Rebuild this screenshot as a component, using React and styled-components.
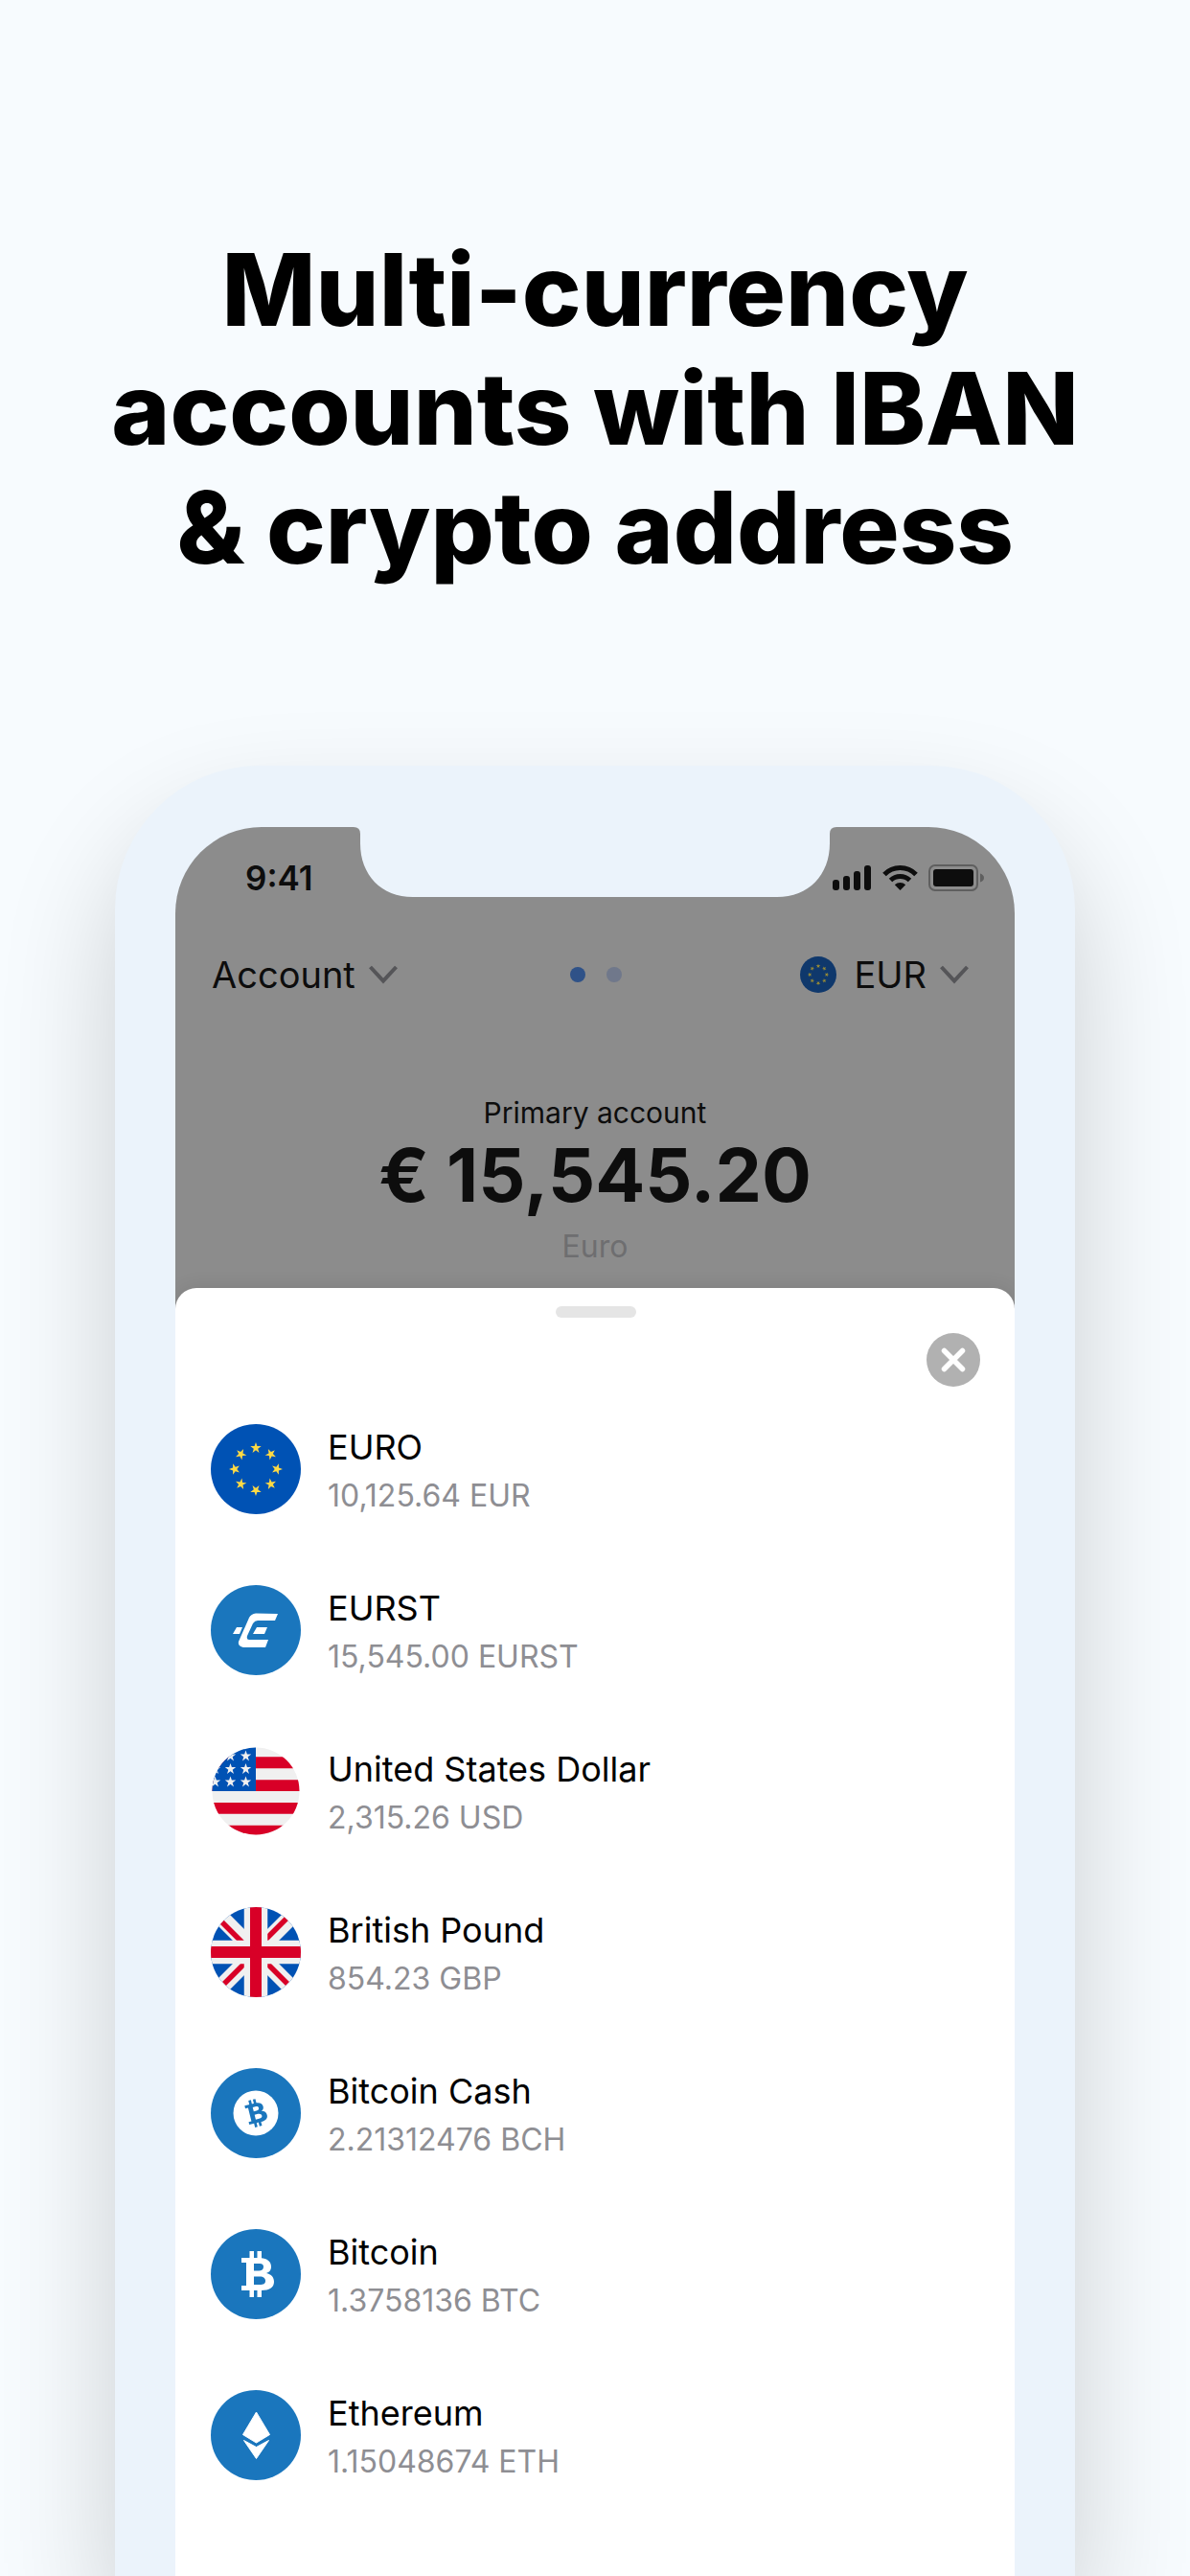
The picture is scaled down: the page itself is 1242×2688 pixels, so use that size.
import React from 'react';
import styled, { createGlobalStyle } from 'styled-components';

const GlobalStyle = createGlobalStyle`
  * {
    box-sizing: border-box;
  }

  body {
    margin: 0;
    background: #f7fbfe;
    font-family: Inter, 'Liberation Sans', sans-serif;
    font-optical-sizing: none;
    color: #000;
  }

  button {
    padding: 0;
    border: 0;
    background: none;
    font: inherit;
    color: inherit;
    cursor: pointer;
  }

  svg {
    display: block;
    flex-shrink: 0;
  }
`

const Page = styled.main`
  height: 100vh;
  display: flex;
  flex-direction: column;
  align-items: center;
  overflow: hidden;
`

const Headline = styled.h1`
  width: 100%;
  margin: 0;
  padding: 240px 40px 187px;
  font-size: 104px;
  font-weight: 800;
  line-height: 124px;
  text-align: center;
`

const Phone = styled.section`
  flex: 1;
  display: flex;
  width: 81%;
  max-width: 1002px;
  padding: 64px 63px 0;
  border-radius: 150px 150px 0 0;
  background: #ebf3fb;
  box-shadow: 0 60px 120px rgba(0, 0, 0, 0.18);
`

const Screen = styled.div`
  position: relative;
  flex: 1;
  display: flex;
  flex-direction: column;
  border-radius: 90px 90px 0 0;
  background: #8c8c8c;
  color: #0d0d0d;
  overflow: hidden;
`

const Notch = styled.svg`
  position: absolute;
  top: 0;
  left: 50%;
  width: 504px;
  margin-left: -252px;
`

const StatusBar = styled.div`
  display: flex;
  align-items: center;
  justify-content: space-between;
  height: 106px;
  padding: 0 32px 0 73px;
`

const Time = styled.time`
  font-size: 35px;
  font-weight: 600;
`

const StatusIcons = styled.div`
  display: flex;
  align-items: center;
  gap: 11px;
`

const NavBar = styled.nav`
  display: grid;
  grid-template-columns: 1fr auto 1fr;
  align-items: center;
  height: 96px;
  padding: 0 36px 0 38px;
`

const NavButton = styled.button`
  display: flex;
  align-items: center;
  justify-self: ${props => props.$end ? 'end' : 'start'};
  gap: 14px;
  margin-right: 12px;
  font-size: 38px;
`

const NavFlag = styled.span`
  margin-right: 4px;
`

const Dots = styled.div`
  display: flex;
  gap: 22px;
`

const Dot = styled.span`
  width: 16px;
  height: 16px;
  border-radius: 50%;
  background: ${props => props.$active ? '#2f5288' : '#70788b'};
`

const Balance = styled.div`
  height: 279px;
  padding-top: 76px;
  text-align: center;
`

const AccountName = styled.p`
  margin: 0;
  font-size: 30px;
  line-height: 40px;
`

const Amount = styled.p`
  margin: 0;
  font-size: 77px;
  font-weight: 700;
  line-height: 90px;
`

const CurrencyName = styled.p`
  margin: 10px 0 0;
  font-size: 32px;
  line-height: 40px;
  color: #6e6e70;
`

const Sheet = styled.div`
  flex: 1;
  display: flex;
  flex-direction: column;
  padding: 19px 36px 0 37px;
  border-radius: 22px 22px 0 0;
  background: #fff;
  box-shadow: 0 0 20px rgba(0, 0, 0, 0.1);
  color: #000;
`

const Handle = styled.div`
  align-self: center;
  width: 84px;
  height: 12px;
  border-radius: 6px;
  background: #e5e5e5;
`

const CloseButton = styled.button`
  align-self: flex-end;
  margin-top: 16px;
`

const CurrencyList = styled.ul`
  margin: 2px 0 0;
  padding: 0;
  list-style: none;
`

const CurrencyRow = styled.button`
  display: flex;
  align-items: center;
  gap: 28px;
  width: 100%;
  height: 168px;
  text-align: left;
`

const RowText = styled.span`
  padding-top: 6px;
`

const RowName = styled.span`
  display: block;
  font-size: 36px;
  line-height: 50px;
`

const RowAmount = styled.span`
  display: block;
  font-size: 32px;
  line-height: 52px;
  color: #8e8e93;
`

const STAR = '0,-6 1.4,-1.9 5.7,-1.9 2.2,0.7 3.5,4.9 0,2.3 -3.5,4.9 -2.2,0.7 -5.7,-1.9 -1.4,-1.9'

const EuroIcon = ({ size = 94, dimmed }) => (
  <svg width={size} height={size} viewBox="0 0 94 94">
    <circle cx="47" cy="47" r="47" fill={dimmed ? '#0f386c' : '#0052b4'} />
    {[0, 45, 90, 135, 180, 225, 270, 315].map(a => (
      <polygon
        key={a}
        points={STAR}
        fill={dimmed ? '#9a8c35' : '#ffda44'}
        transform={`rotate(${a} 47 47) translate(47 25)`}
      />
    ))}
  </svg>
)

const EurstIcon = () => (
  <svg width="94" height="94" viewBox="0 0 94 94">
    <circle cx="47" cy="47" r="47" fill="#1a76bd" />
    <g fill="#fff">
      <path d="M70 30 67 37H49Q46 37 44 40L38 53Q37 57 40 57H60L57 65H34Q28 64 29 59L40 34Q42 30 47 29.500Z" />
      <path d="M48 44H59L56 51H44Z" />
      <path d="M27 44H33L30 51H23Z" />
    </g>
  </svg>
)

const DollarIcon = () => (
  <svg width="94" height="94" viewBox="0 0 94 94">
    <clipPath id="usd"><circle cx="47" cy="47" r="45.500" /></clipPath>
    <g clipPath="url(#usd)">
      <rect width="94" height="94" fill="#f0f0f0" />
      <path fill="#d80027" d="M0 11.300H94V23.200H0ZM0 35.200H94V47H0ZM0 59H94V70.800H0ZM0 82.800H94V95H0Z" />
      <rect width="47" height="47" fill="#0052b4" />
      {[10.500, 24, 37.500].map(y => [4.500, 20.500, 36.500].map(x => (
        <polygon key={`${x}-${y}`} points={STAR} fill="#f0f0f0" transform={`translate(${x} ${y})`} />
      )))}
    </g>
  </svg>
)

const PoundIcon = () => (
  <svg width="94" height="94" viewBox="0 0 94 94">
    <clipPath id="gbp"><circle cx="47" cy="47" r="47" /></clipPath>
    <g clipPath="url(#gbp)">
      <rect width="94" height="94" fill="#0052b4" />
      <path d="M0 0 94 94M94 0 0 94" stroke="#f0f0f0" strokeWidth="17" />
      <path d="M11 15 34 38M80 11 55 36M37 57 14 80M57 57 80 80" stroke="#d80027" strokeWidth="5.500" />
      <path d="M47 0V94M0 47H94" stroke="#f0f0f0" strokeWidth="24.500" />
      <path d="M47 0V94M0 47H94" stroke="#d80027" strokeWidth="12" />
    </g>
  </svg>
)

// the coin sign on its own, centred on 0,0
const BitcoinSign = ({ color, hole }) => (
  <g fill={color}>
    <path d="M-15-17H3C12-17 16-13 16-8C16-4 14-2 11-1C16 0 19 3 19 8C19 14 14 17 6 17H-15V12H-10V-12H-15Z" />
    <path d="M-6.500-24H-2V-16H-6.500ZM1.500-24H6V-16H1.500ZM-6.500 16H-2V24H-6.500ZM1.500 16H6V24H1.500Z" />
    <path fill={hole} d="M-2-11H4C7-11 8-9.500 8-7.500C8-5 6-3.500 3-3.500H-2ZM-2 2.500H4C8 2.500 10 4.500 10 7C10 10 8 11 4 11H-2Z" />
  </g>
)

const BitcoinCashIcon = () => (
  <svg width="94" height="94" viewBox="0 0 94 94">
    <circle cx="47" cy="47" r="47" fill="#1a76bd" />
    <circle cx="47" cy="47" r="23.500" fill="#fff" />
    <g transform="translate(46.500 47) rotate(-14) scale(0.6)">
      <BitcoinSign color="#1a76bd" hole="#fff" />
    </g>
  </svg>
)

const BitcoinIcon = () => (
  <svg width="94" height="94" viewBox="0 0 94 94">
    <circle cx="47" cy="47" r="47" fill="#1a76bd" />
    <g transform="translate(47 47)">
      <BitcoinSign color="#fff" hole="#1a76bd" />
    </g>
  </svg>
)

const EthereumIcon = () => (
  <svg width="94" height="94" viewBox="0 0 94 94">
    <circle cx="47" cy="47" r="47" fill="#1a76bd" />
    <g fill="#fff" stroke="#fff" strokeWidth="1" strokeLinejoin="round">
      <path d="M47.500 23 61.500 46.500 47.500 55 33.500 46.500Z" />
      <path d="M34.500 52.500 47.500 59.500 60.500 52.500 47.500 71.500Z" />
    </g>
  </svg>
)

const Chevron = () => (
  <svg width="30" height="20" viewBox="0 0 30 20" fill="none" stroke="#555558" strokeWidth="4">
    <path d="M1.500 2 15 16.500 28.500 2" />
  </svg>
)

const Signal = () => (
  <svg width="41" height="26" viewBox="0 0 41 26" fill="#0d0d0d">
    <rect y="15" width="7" height="11" rx="3" />
    <rect x="11" y="11" width="7" height="15" rx="3" />
    <rect x="22" y="6" width="7" height="20" rx="3" />
    <rect x="33" width="7" height="26" rx="3" />
  </svg>
)

const Wifi = () => (
  <svg width="37" height="26" viewBox="0 0 37 26" fill="none" stroke="#0d0d0d" strokeWidth="5">
    <path d="M2 9.500A23 23 0 0 1 35 9.500" />
    <path d="M8.500 15.500A14.500 14.500 0 0 1 28.500 15.500" />
    <path d="M18.500 26 12.800 20.300A8.200 8.200 0 0 1 24.200 20.300Z" fill="#0d0d0d" stroke="none" />
  </svg>
)

const Battery = () => (
  <svg width="58" height="28" viewBox="0 0 58 28">
    <rect x="1" y="1" width="50" height="26" rx="6" fill="none" stroke="#5f5f5f" strokeWidth="2" />
    <rect x="5" y="5" width="42" height="18" rx="3" fill="#0d0d0d" />
    <path d="M54 9.500Q58 11 58 14T54 18.500Z" fill="#5f5f5f" />
  </svg>
)

const CloseIcon = () => (
  <svg width="56" height="56" viewBox="0 0 56 56">
    <circle cx="28" cy="28" r="28" fill="#b1b1b1" />
    <path d="M18.500 18.500 37.500 37.500M37.500 18.500 18.500 37.500" stroke="#fff" strokeWidth="5.500" strokeLinecap="round" />
  </svg>
)

const currencies = [
  { name: 'EURO', amount: '10,125.64 EUR', Icon: EuroIcon },
  { name: 'EURST', amount: '15,545.00 EURST', Icon: EurstIcon },
  { name: 'United States Dollar', amount: '2,315.26 USD', Icon: DollarIcon },
  { name: 'British Pound', amount: '854.23 GBP', Icon: PoundIcon },
  { name: 'Bitcoin Cash', amount: '2.21312476 BCH', Icon: BitcoinCashIcon },
  { name: 'Bitcoin', amount: '1.3758136 BTC', Icon: BitcoinIcon },
  { name: 'Ethereum', amount: '1.15048674 ETH', Icon: EthereumIcon },
]

const App = () => {
  return (
    <Page>
      <GlobalStyle />
      <Headline>
        Multi-currency<br />
        accounts with IBAN<br />
        &amp; crypto address
      </Headline>

      <Phone>
        <Screen>
          <Notch viewBox="0 0 504 73">
            <path
              d="M0 0H504Q497 0 497 7V17C497 50 475 73 442 73H62C29 73 7 50 7 17V7Q7 0 0 0Z"
              fill="#ebf3fb"
            />
          </Notch>

          <StatusBar>
            <Time>9:41</Time>
            <StatusIcons>
              <Signal />
              <Wifi />
              <Battery />
            </StatusIcons>
          </StatusBar>

          <NavBar>
            <NavButton>Account <Chevron /></NavButton>
            <Dots>
              <Dot $active />
              <Dot />
            </Dots>
            <NavButton $end>
              <NavFlag><EuroIcon size={38} dimmed /></NavFlag>
              EUR
              <Chevron />
            </NavButton>
          </NavBar>

          <Balance>
            <AccountName>Primary account</AccountName>
            <Amount>€ 15,545.20</Amount>
            <CurrencyName>Euro</CurrencyName>
          </Balance>

          <Sheet>
            <Handle />
            <CloseButton aria-label="Close"><CloseIcon /></CloseButton>
            <CurrencyList>
              {currencies.map(({ name, amount, Icon }) => (
                <li key={name}>
                  <CurrencyRow>
                    <Icon />
                    <RowText>
                      <RowName>{name}</RowName>
                      <RowAmount>{amount}</RowAmount>
                    </RowText>
                  </CurrencyRow>
                </li>
              ))}
            </CurrencyList>
          </Sheet>
        </Screen>
      </Phone>
    </Page>
  );
}

export default App;
